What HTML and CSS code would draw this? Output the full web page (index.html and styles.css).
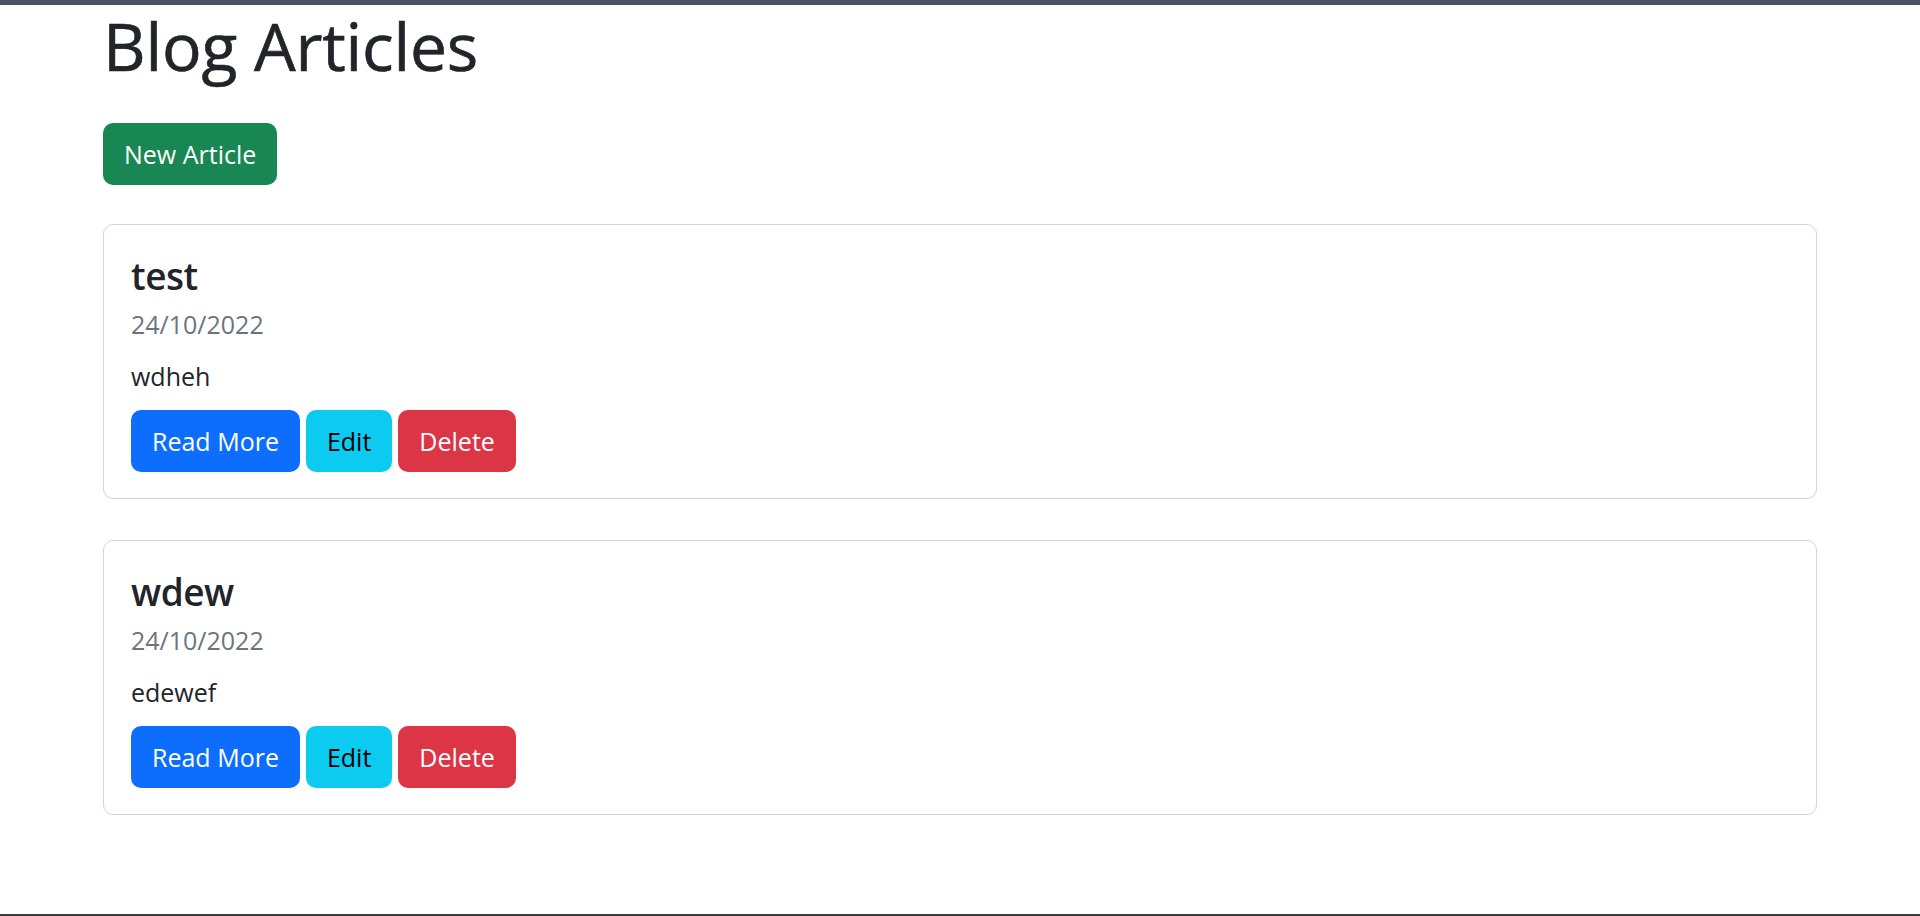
FILE: index.html
```html
<!DOCTYPE html>
<html lang="en">
<head>
    <meta charset="UTF-8">
    <meta name="viewport" content="width=device-width, initial-scale=1.0">
    <link rel="stylesheet" href="styles.css">
    <title>Blog Articles</title>
</head>
<body>
    <div class="topbar"></div>
    <main class="page">
        <h1 class="page-title">Blog Articles</h1>
        <a href="#" class="btn btn-success">New Article</a>
        <div class="articles">
            <div class="card">
                <h3 class="card-title">test</h3>
                <div class="card-date">24/10/2022</div>
                <p class="card-text">wdheh</p>
                <div class="card-actions">
                    <a href="#" class="btn btn-primary">Read More</a>
                    <a href="#" class="btn btn-info">Edit</a>
                    <button class="btn btn-danger">Delete</button>
                </div>
            </div>
            <div class="card">
                <h3 class="card-title">wdew</h3>
                <div class="card-date">24/10/2022</div>
                <p class="card-text">edewef</p>
                <div class="card-actions">
                    <a href="#" class="btn btn-primary">Read More</a>
                    <a href="#" class="btn btn-info">Edit</a>
                    <button class="btn btn-danger">Delete</button>
                </div>
            </div>
        </div>
    </main>
    <div class="bottombar"></div>
</body>
</html>
```

FILE: styles.css
```css
body {
    font-family: "Open Sans", "Noto Sans", sans-serif;
    color: #212529;
    background-color: #fff;
    margin: 0;
    padding: 0;
    min-height: 916px;
    display: flex;
    flex-direction: column;
}

.topbar {
    height: 5px;
    background-color: #46555f;
}

.bottombar {
    margin-top: auto;
    height: 2px;
    background-color: #3c3c3c;
}

.page {
    padding: 0 103px;
    display: flex;
    flex-direction: column;
    align-items: flex-start;
}

.page-title {
    font-size: 66px;
    font-weight: 400;
    line-height: 78px;
    letter-spacing: -0.2px;
    -webkit-text-stroke: 0.6px #212529;
    margin: 1px 0 39px 0;
}

.btn {
    display: inline-block;
    font-family: inherit;
    font-size: 25px;
    line-height: 40px;
    padding: 11px 21px;
    border: none;
    border-radius: 10px;
    text-decoration: none;
    color: #fff;
    cursor: pointer;
}

.btn-success {
    background-color: #198754;
}

.btn-primary {
    background-color: #0d6efd;
}

.btn-info {
    background-color: #0dcaf0;
    color: #000;
}

.btn-danger {
    background-color: #dc3545;
}

.articles {
    align-self: stretch;
    display: flex;
    flex-direction: column;
    gap: 41px;
    margin-top: 39px;
}

.card {
    border: 1px solid #d3d3d3;
    border-radius: 10px;
    padding: 26px 27px;
}

.card-title {
    font-size: 37px;
    font-weight: 600;
    line-height: 46px;
    letter-spacing: -0.5px;
    margin: 2px 0 0 0;
}

.card-date {
    font-size: 25px;
    line-height: 39px;
    color: #6c757d;
    margin-top: 6px;
}

.card-text {
    font-size: 25px;
    line-height: 39px;
    margin: 13px 0 0 0;
}

.card-actions {
    display: flex;
    gap: 6px;
    margin-top: 14px;
}
```
